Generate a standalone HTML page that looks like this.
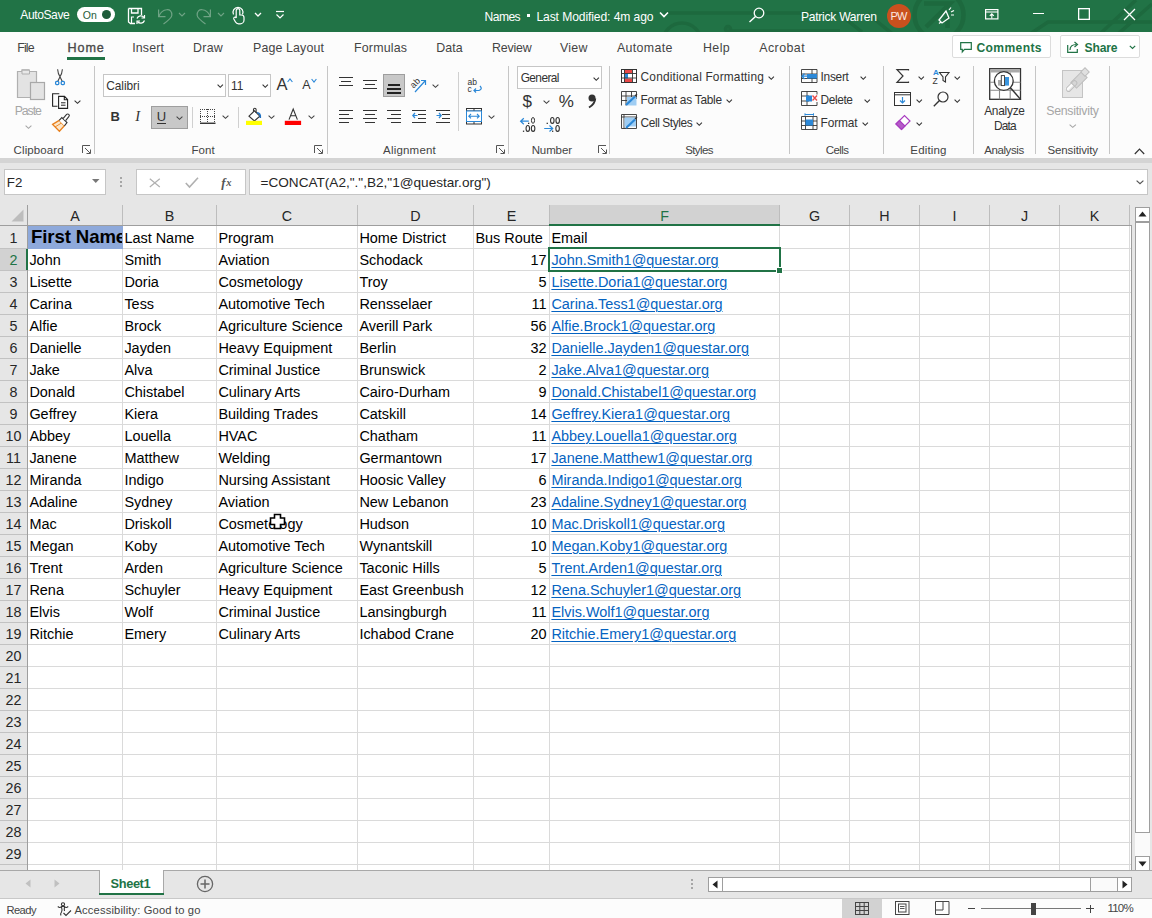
<!DOCTYPE html><html><head><meta charset="utf-8"><style>html,body{margin:0;padding:0;width:1152px;height:918px;overflow:hidden;background:#fff;position:relative}.t{position:absolute;white-space:nowrap;line-height:1;font-family:"Liberation Sans",sans-serif}svg{overflow:visible}</style></head><body>
<div style="position:absolute;left:0;top:0;width:1152px;height:32px;background:#217346;overflow:hidden">
<svg width="1152" height="32" style="position:absolute;left:0;top:0" fill="none" stroke="#1d693e" stroke-width="3.5"><path d="M664 13 H838 L862 32"/><circle cx="682" cy="42" r="19"/><circle cx="728" cy="29" r="2.5"/><path d="M730 31 H840"/><path d="M868 14 L900 40"/><circle cx="939" cy="15" r="24.5" stroke-width="4.5"/><path d="M924 3.5 H950 L926 27" stroke-width="4.5"/><path d="M947.5 17 V28" stroke-width="4.5"/><path d="M1030 34 L1048 22 H1152"/><path d="M1100 34 L1136 0"/><path d="M1118 34 L1152 4"/></svg>
</div>
<div class="t" style="left:20.30px;top:9.36px;font-size:12.1px;color:#ffffff;letter-spacing:-0.424px;font-weight:normal;font-style:normal;">AutoSave</div>
<div style="position:absolute;left:77px;top:7px;width:38px;height:15px;background:#fff;border-radius:8px"></div>
<div class="t" style="left:82.80px;top:9.71px;font-size:10.5px;color:#1e5c3a;letter-spacing:0.000px;font-weight:normal;font-style:normal;">On</div>
<div style="position:absolute;left:102px;top:10px;width:9px;height:9px;border-radius:50%;background:#1e5c3a"></div>
<svg style="position:absolute;left:127px;top:7px;" width="19" height="18" viewBox="0 0 19 18"><path d="M1.5 1.5 H14.5 V8" fill="none" stroke="#fff" stroke-width="1.3"/><path d="M1.5 1.5 V15 L3.5 16.5 H8" fill="none" stroke="#fff" stroke-width="1.3"/><path d="M4.5 1.5 V6 H11 V1.5" fill="none" stroke="#fff" stroke-width="1.3"/><path d="M4.5 16 V10 H7" fill="none" stroke="#fff" stroke-width="1.2"/><path d="M10 11.5 A4 4 0 0 1 17 10.5" fill="none" stroke="#fff" stroke-width="1.3"/><path d="M17.5 8 V11 H14.5" fill="none" stroke="#fff" stroke-width="1.2"/><path d="M17.5 13.5 A4 4 0 0 1 10.5 14.5" fill="none" stroke="#fff" stroke-width="1.3"/><path d="M10 17 V14 H13" fill="none" stroke="#fff" stroke-width="1.2"/></svg>
<svg style="position:absolute;left:150px;top:0px;left:0;top:0" width="80" height="32" viewBox="0 0 80 32"><path d="M158.6 9.5 V16.6 H165.5" fill="none" stroke="#6fa385" stroke-width="1.2"/><path d="M159 16 C162 8.5, 172.5 7, 171.8 15.5 C171.5 18, 169 20, 163.5 24" fill="none" stroke="#6fa385" stroke-width="1.2"/></svg>
<svg style="position:absolute;left:178px;top:12px;" width="8" height="5" viewBox="0 0 8 5"><path d="M1 1 L4 4 L7 1" fill="none" stroke="#6fa385" stroke-width="1.1"/></svg>
<svg style="position:absolute;left:190px;top:0px;left:0;top:0" width="30" height="32" viewBox="0 0 30 32"><path d="M210.4 9.5 V16.6 H203.5" fill="none" stroke="#6fa385" stroke-width="1.2"/><path d="M210 16 C207 8.5, 196.5 7, 197.2 15.5 C197.5 18, 200 20, 205.5 24" fill="none" stroke="#6fa385" stroke-width="1.2"/></svg>
<svg style="position:absolute;left:217px;top:12px;" width="8" height="5" viewBox="0 0 8 5"><path d="M1 1 L4 4 L7 1" fill="none" stroke="#6fa385" stroke-width="1.1"/></svg>
<svg style="position:absolute;left:0px;top:0px;left:0;top:0" width="300" height="32" viewBox="0 0 300 32"><path d="M233.5 14.5 A5 5 0 1 1 242.5 14.5" fill="none" stroke="#fff" stroke-width="1.2"/><path d="M236.2 18 V10.5 A1.8 1.8 0 0 1 239.8 10.5 V15 H241.5 A2.5 2.5 0 0 1 244 17.5 V20 A3.8 3.8 0 0 1 240.2 23.8 H238.5 A3.5 3.5 0 0 1 235.5 22 L233.8 19 A1.3 1.3 0 0 1 236.2 18 Z" fill="none" stroke="#fff" stroke-width="1.2"/></svg>
<svg style="position:absolute;left:254px;top:12px;" width="8" height="5" viewBox="0 0 8 5"><path d="M1 1 L4 4 L7 1" fill="none" stroke="#fff" stroke-width="1.3"/></svg>
<svg style="position:absolute;left:275px;top:10px;" width="10" height="10" viewBox="0 0 10 10"><path d="M1 1.5 H9" stroke="#fff" stroke-width="1.2"/><path d="M1.5 4.5 L5 8 L8.5 4.5" fill="none" stroke="#fff" stroke-width="1.2"/></svg>
<div class="t" style="left:484.60px;top:10.66px;font-size:12.1px;color:#ffffff;letter-spacing:-0.582px;font-weight:normal;font-style:normal;">Names</div>
<div style="position:absolute;left:527px;top:14px;width:3px;height:3px;background:#fff"></div>
<div class="t" style="left:536.40px;top:10.66px;font-size:12.1px;color:#ffffff;letter-spacing:-0.093px;font-weight:normal;font-style:normal;">Last Modified: 4m ago</div>
<svg style="position:absolute;left:659px;top:11px;" width="10" height="7" viewBox="0 0 10 7"><path d="M1 1.5 L5 5.5 L9 1.5" fill="none" stroke="#fff" stroke-width="1.6"/></svg>
<svg style="position:absolute;left:748px;top:7px;" width="18" height="16" viewBox="0 0 18 16"><circle cx="11" cy="6" r="4.8" fill="none" stroke="#fff" stroke-width="1.3"/><path d="M7.5 9.5 L1.5 15" stroke="#fff" stroke-width="1.4"/></svg>
<div class="t" style="left:801.00px;top:10.66px;font-size:12.1px;color:#ffffff;letter-spacing:-0.274px;font-weight:normal;font-style:normal;">Patrick Warren</div>
<div style="position:absolute;left:887px;top:4px;width:24px;height:24px;border-radius:50%;background:#c9501e"></div>
<div class="t" style="left:890.50px;top:10.99px;font-size:11px;color:#fde7e0;letter-spacing:-0.719px;font-weight:normal;font-style:normal;">PW</div>
<svg style="position:absolute;left:937px;top:6px;" width="18" height="18" viewBox="0 0 18 18"><path d="M2 14 L5 17 L12 12 L9 5 Z" fill="none" stroke="#fff" stroke-width="1.3"/><path d="M4 16 L2 17.5" stroke="#fff" stroke-width="1.3"/><path d="M12 4 L14 1.5 M14 6 L17 4.5 M14 9 L17 9" stroke="#fff" stroke-width="1.2"/></svg>
<svg style="position:absolute;left:985px;top:9px;" width="14" height="11" viewBox="0 0 14 11"><rect x="0.6" y="0.6" width="12.3" height="9.3" fill="none" stroke="#fff" stroke-width="1.2"/><path d="M0.6 3 H13" stroke="#fff" stroke-width="1.1"/><path d="M6.8 9.5 V4.8 M4.8 6.8 L6.8 4.8 L8.8 6.8" fill="none" stroke="#fff" stroke-width="1.1"/></svg>
<div style="position:absolute;left:1033px;top:13px;width:11px;height:1.3px;background:#fff"></div>
<svg style="position:absolute;left:1078px;top:8px;" width="12" height="12" viewBox="0 0 12 12"><rect x="0.65" y="0.65" width="10.7" height="10.7" fill="none" stroke="#fff" stroke-width="1.3"/></svg>
<svg style="position:absolute;left:1123px;top:8px;" width="13" height="13" viewBox="0 0 13 13"><path d="M1 1 L12 12 M12 1 L1 12" stroke="#fff" stroke-width="1.3"/></svg>
<div style="position:absolute;left:0px;top:32px;width:1152px;height:126px;background:#fcfcfc"></div>
<div class="t" style="left:17.30px;top:41.80px;font-size:12.4px;color:#444444;letter-spacing:-0.894px;font-weight:normal;font-style:normal;">File</div>
<div class="t" style="left:67.60px;top:41.63px;font-size:12.6px;color:#4a4a4a;letter-spacing:0.863px;font-weight:normal;font-style:normal;-webkit-text-stroke:0.35px #4a4a4a">Home</div>
<div class="t" style="left:132.20px;top:41.80px;font-size:12.4px;color:#444444;letter-spacing:0.158px;font-weight:normal;font-style:normal;">Insert</div>
<div class="t" style="left:193.00px;top:41.80px;font-size:12.4px;color:#444444;letter-spacing:0.288px;font-weight:normal;font-style:normal;">Draw</div>
<div class="t" style="left:253.00px;top:41.80px;font-size:12.4px;color:#444444;letter-spacing:0.136px;font-weight:normal;font-style:normal;">Page Layout</div>
<div class="t" style="left:354.00px;top:41.80px;font-size:12.4px;color:#444444;letter-spacing:0.189px;font-weight:normal;font-style:normal;">Formulas</div>
<div class="t" style="left:436.30px;top:41.80px;font-size:12.4px;color:#444444;letter-spacing:0.069px;font-weight:normal;font-style:normal;">Data</div>
<div class="t" style="left:491.90px;top:41.80px;font-size:12.4px;color:#444444;letter-spacing:-0.151px;font-weight:normal;font-style:normal;">Review</div>
<div class="t" style="left:560.00px;top:41.80px;font-size:12.4px;color:#444444;letter-spacing:0.249px;font-weight:normal;font-style:normal;">View</div>
<div class="t" style="left:616.90px;top:41.80px;font-size:12.4px;color:#444444;letter-spacing:0.346px;font-weight:normal;font-style:normal;">Automate</div>
<div class="t" style="left:703.00px;top:41.80px;font-size:12.4px;color:#444444;letter-spacing:0.399px;font-weight:normal;font-style:normal;">Help</div>
<div class="t" style="left:759.20px;top:41.80px;font-size:12.4px;color:#444444;letter-spacing:0.461px;font-weight:normal;font-style:normal;">Acrobat</div>
<div style="position:absolute;left:67px;top:57px;width:38px;height:3px;background:#217346"></div>
<div style="position:absolute;left:952px;top:35px;width:99px;height:23px;background:#fff;border:1px solid #dcdcdc;border-radius:2px;box-sizing:border-box"></div>
<svg style="position:absolute;left:960px;top:42px;" width="12" height="11" viewBox="0 0 12 11"><path d="M0.7 0.7 H11.3 V7.3 H4.5 L2.3 9.8 V7.3 H0.7 Z" fill="none" stroke="#217346" stroke-width="1.2"/></svg>
<div class="t" style="left:976.40px;top:42.16px;font-size:12.1px;color:#217346;letter-spacing:0.382px;font-weight:bold;font-style:normal;">Comments</div>
<div style="position:absolute;left:1060px;top:35px;width:80px;height:23px;background:#fff;border:1px solid #dcdcdc;border-radius:2px;box-sizing:border-box"></div>
<svg style="position:absolute;left:1067px;top:41px;" width="13" height="12" viewBox="0 0 13 12"><path d="M0.7 4 V11.3 H10.3 V8" fill="none" stroke="#217346" stroke-width="1.2"/><path d="M3 9 C3 5 6 3.5 9.5 3.5" fill="none" stroke="#217346" stroke-width="1.2"/><path d="M7.5 1 L10.5 3.5 L7.5 6" fill="none" stroke="#217346" stroke-width="1.2"/></svg>
<div class="t" style="left:1084.50px;top:42.16px;font-size:12.1px;color:#217346;letter-spacing:-0.157px;font-weight:bold;font-style:normal;">Share</div>
<svg style="position:absolute;left:1129px;top:45px;" width="7" height="5" viewBox="0 0 7 5"><path d="M0.8 0.8 L3.5 3.5 L6.2 0.8" fill="none" stroke="#217346" stroke-width="1.2"/></svg>
<div class="t" style="left:13.60px;top:144.97px;font-size:11.5px;color:#444444;letter-spacing:0.110px;font-weight:normal;font-style:normal;">Clipboard</div>
<div class="t" style="left:191.50px;top:144.97px;font-size:11.5px;color:#444444;letter-spacing:0.096px;font-weight:normal;font-style:normal;">Font</div>
<div class="t" style="left:383.00px;top:144.97px;font-size:11.5px;color:#444444;letter-spacing:0.208px;font-weight:normal;font-style:normal;">Alignment</div>
<div class="t" style="left:531.70px;top:144.97px;font-size:11.5px;color:#444444;letter-spacing:-0.120px;font-weight:normal;font-style:normal;">Number</div>
<div class="t" style="left:685.20px;top:144.97px;font-size:11.5px;color:#444444;letter-spacing:-0.603px;font-weight:normal;font-style:normal;">Styles</div>
<div class="t" style="left:825.80px;top:144.97px;font-size:11.5px;color:#444444;letter-spacing:-0.615px;font-weight:normal;font-style:normal;">Cells</div>
<div class="t" style="left:910.30px;top:144.97px;font-size:11.5px;color:#444444;letter-spacing:0.173px;font-weight:normal;font-style:normal;">Editing</div>
<div class="t" style="left:984.20px;top:144.97px;font-size:11.5px;color:#444444;letter-spacing:-0.403px;font-weight:normal;font-style:normal;">Analysis</div>
<div class="t" style="left:1047.50px;top:144.97px;font-size:11.5px;color:#444444;letter-spacing:-0.127px;font-weight:normal;font-style:normal;">Sensitivity</div>
<div style="position:absolute;left:94px;top:66px;width:1px;height:88px;background:#c6c6c6"></div>
<div style="position:absolute;left:327px;top:66px;width:1px;height:88px;background:#c6c6c6"></div>
<div style="position:absolute;left:508px;top:66px;width:1px;height:88px;background:#c6c6c6"></div>
<div style="position:absolute;left:609px;top:66px;width:1px;height:88px;background:#c6c6c6"></div>
<div style="position:absolute;left:789px;top:66px;width:1px;height:88px;background:#c6c6c6"></div>
<div style="position:absolute;left:883px;top:66px;width:1px;height:88px;background:#c6c6c6"></div>
<div style="position:absolute;left:973px;top:66px;width:1px;height:88px;background:#c6c6c6"></div>
<div style="position:absolute;left:1035px;top:66px;width:1px;height:88px;background:#c6c6c6"></div>
<div style="position:absolute;left:1109px;top:66px;width:1px;height:88px;background:#c6c6c6"></div>
<svg style="position:absolute;left:82px;top:145px;" width="9" height="9" viewBox="0 0 9 9"><path d="M0.5 8 V0.5 H8" fill="none" stroke="#555" stroke-width="1"/><path d="M3 3 L8 8 M4.5 8.5 H8.5 V4.5" fill="none" stroke="#555" stroke-width="1"/></svg>
<svg style="position:absolute;left:314px;top:145px;" width="9" height="9" viewBox="0 0 9 9"><path d="M0.5 8 V0.5 H8" fill="none" stroke="#555" stroke-width="1"/><path d="M3 3 L8 8 M4.5 8.5 H8.5 V4.5" fill="none" stroke="#555" stroke-width="1"/></svg>
<svg style="position:absolute;left:496px;top:145px;" width="9" height="9" viewBox="0 0 9 9"><path d="M0.5 8 V0.5 H8" fill="none" stroke="#555" stroke-width="1"/><path d="M3 3 L8 8 M4.5 8.5 H8.5 V4.5" fill="none" stroke="#555" stroke-width="1"/></svg>
<svg style="position:absolute;left:598px;top:145px;" width="9" height="9" viewBox="0 0 9 9"><path d="M0.5 8 V0.5 H8" fill="none" stroke="#555" stroke-width="1"/><path d="M3 3 L8 8 M4.5 8.5 H8.5 V4.5" fill="none" stroke="#555" stroke-width="1"/></svg>
<svg style="position:absolute;left:15px;top:69px;" width="31" height="32" viewBox="0 0 31 32"><path d="M2.5 2.5 H7 V0.8 H14 V2.5 H21.5 V28.5 H2.5 Z" fill="#e3e3e3" stroke="#b0b0b0" stroke-width="1.2"/><path d="M7 1.2 H14.5 V5 H7 Z" fill="#e8e8e8" stroke="#b0b0b0" stroke-width="1"/><rect x="15.5" y="13.5" width="14" height="17" fill="#e3e3e3" stroke="#a8a8a8" stroke-width="1.2"/></svg>
<div class="t" style="left:14.70px;top:104.99px;font-size:12.3px;color:#a6a6a6;letter-spacing:-1.063px;font-weight:normal;font-style:normal;">Paste</div>
<svg style="position:absolute;left:24.5px;top:124.5px;" width="7" height="4.5" viewBox="0 0 7 4.5"><path d="M0.6 0.6 L3.5 3.3 L6.4 0.6" fill="none" stroke="#a6a6a6" stroke-width="1.1"/></svg>
<svg style="position:absolute;left:0px;top:0px;left:0;top:0" width="10" height="10" viewBox="0 0 10 10"><path d="M57.6 69.3 Q58 74 60 76.8 L62.3 81.5 M62.4 69.3 Q62 74 60 76.8 L57.7 81.5" fill="none" stroke="#444" stroke-width="1.1"/><rect x="55.6" y="81.4" width="3.2" height="3.2" rx="1" fill="none" stroke="#2b88d8" stroke-width="1.3"/><rect x="61.2" y="81.4" width="3.2" height="3.2" rx="1" fill="none" stroke="#2b88d8" stroke-width="1.3"/></svg>
<svg style="position:absolute;left:0px;top:0px;left:0;top:0" width="10" height="10" viewBox="0 0 10 10"><path d="M59.3 93.8 H52.6 V106.3 H57.5" fill="none" stroke="#222" stroke-width="1.1"/><path d="M58.6 96.4 H64.5 L67.6 99.5 V108.4 H58.6 Z M64.3 96.4 V99.7 H67.6" fill="#fff" stroke="#222" stroke-width="1.1"/><path d="M61 102.8 H65.5 M61 105.2 H65.5" stroke="#222" stroke-width="1"/></svg>
<svg style="position:absolute;left:74px;top:99.5px;" width="7" height="4.5" viewBox="0 0 7 4.5"><path d="M0.6 0.6 L3.5 3.3 L6.4 0.6" fill="none" stroke="#333" stroke-width="1.1"/></svg>
<svg style="position:absolute;left:0px;top:0px;left:0;top:0" width="10" height="10" viewBox="0 0 10 10"><path d="M52.6 124.4 L59.2 120.4 L64.4 125.8 L59.4 131.2 Z" fill="#fde6c8" stroke="#e8801e" stroke-width="1.3"/><path d="M55 127 L61.5 123" stroke="#e8801e" stroke-width="0.9"/><path d="M59.2 120.4 L61.8 117.6 L67 122.6 L64.4 125.8" fill="#fff" stroke="#333" stroke-width="1.1"/><path d="M63 118.6 L66.6 114.4 A1.4 1.4 0 0 1 68.8 116.6 L65.6 120.6" fill="#fff" stroke="#333" stroke-width="1.1"/></svg>
<div style="position:absolute;left:103px;top:74px;width:123px;height:23px;background:#fff;border:1px solid #c6c6c6;box-sizing:border-box"></div>
<div class="t" style="left:106.20px;top:80.73px;font-size:11.9px;color:#333;letter-spacing:-0.037px;font-weight:normal;font-style:normal;">Calibri</div>
<svg style="position:absolute;left:216.5px;top:84.3px;" width="6.5" height="4.5" viewBox="0 0 6.5 4.5"><path d="M0.6 0.6 L3.25 3.3 L5.9 0.6" fill="none" stroke="#333" stroke-width="1.1"/></svg>
<div style="position:absolute;left:228px;top:74px;width:43px;height:23px;background:#fff;border:1px solid #c6c6c6;box-sizing:border-box"></div>
<div class="t" style="left:231.00px;top:80.73px;font-size:11.9px;color:#333;letter-spacing:0.000px;font-weight:normal;font-style:normal;">11</div>
<svg style="position:absolute;left:261.7px;top:84.3px;" width="6.5" height="4.5" viewBox="0 0 6.5 4.5"><path d="M0.6 0.6 L3.25 3.3 L5.9 0.6" fill="none" stroke="#333" stroke-width="1.1"/></svg>
<div class="t" style="left:276.50px;top:75.93px;font-size:16.5px;color:#333;letter-spacing:0.000px;font-weight:normal;font-style:normal;">A</div>
<svg style="position:absolute;left:287px;top:78px;" width="6" height="5" viewBox="0 0 6 5"><path d="M0.6 4 L3 1 L5.4 4" fill="none" stroke="#2b88d8" stroke-width="1.1"/></svg>
<div class="t" style="left:302.30px;top:79.32px;font-size:12.5px;color:#333;letter-spacing:0.000px;font-weight:normal;font-style:normal;">A</div>
<svg style="position:absolute;left:311px;top:78px;" width="6" height="5" viewBox="0 0 6 5"><path d="M0.6 1 L3 4 L5.4 1" fill="none" stroke="#2b88d8" stroke-width="1.1"/></svg>
<div class="t" style="left:110.60px;top:110.20px;font-size:13px;color:#333;letter-spacing:0.000px;font-weight:bold;font-style:normal;">B</div>
<div class="t" style="left:135.30px;top:109.23px;font-size:14.5px;color:#333;letter-spacing:0.000px;font-weight:normal;font-style:normal;font-family:'Liberation Serif',serif;font-style:italic">I</div>
<div style="position:absolute;left:151px;top:106px;width:37px;height:23px;background:#c8c8c8;border:1px solid #9e9e9e;box-sizing:border-box"></div>
<div class="t" style="left:156.80px;top:110.00px;font-size:13px;color:#333;letter-spacing:0.000px;font-weight:normal;font-style:normal;">U</div>
<div style="position:absolute;left:157px;top:123px;width:9px;height:1px;background:#333"></div>
<svg style="position:absolute;left:176.3px;top:115.5px;" width="7" height="4.5" viewBox="0 0 7 4.5"><path d="M0.6 0.6 L3.5 3.3 L6.4 0.6" fill="none" stroke="#444" stroke-width="1.1"/></svg>
<div style="position:absolute;left:192px;top:107px;width:1px;height:21px;background:#d0d0d0"></div>
<svg style="position:absolute;left:0px;top:0px;left:0;top:0" width="10" height="10" viewBox="0 0 10 10"><g fill="#444"><rect x="200" y="109" width="1" height="1"/><rect x="200" y="116" width="1" height="1"/><rect x="202" y="109" width="1" height="1"/><rect x="202" y="116" width="1" height="1"/><rect x="204" y="109" width="1" height="1"/><rect x="204" y="116" width="1" height="1"/><rect x="206" y="109" width="1" height="1"/><rect x="206" y="116" width="1" height="1"/><rect x="208" y="109" width="1" height="1"/><rect x="208" y="116" width="1" height="1"/><rect x="210" y="109" width="1" height="1"/><rect x="210" y="116" width="1" height="1"/><rect x="212" y="109" width="1" height="1"/><rect x="212" y="116" width="1" height="1"/><rect x="214" y="109" width="1" height="1"/><rect x="214" y="116" width="1" height="1"/><rect x="200" y="109" width="1" height="1"/><rect x="207" y="109" width="1" height="1"/><rect x="214" y="109" width="1" height="1"/><rect x="200" y="111" width="1" height="1"/><rect x="207" y="111" width="1" height="1"/><rect x="214" y="111" width="1" height="1"/><rect x="200" y="113" width="1" height="1"/><rect x="207" y="113" width="1" height="1"/><rect x="214" y="113" width="1" height="1"/><rect x="200" y="115" width="1" height="1"/><rect x="207" y="115" width="1" height="1"/><rect x="214" y="115" width="1" height="1"/><rect x="200" y="117" width="1" height="1"/><rect x="207" y="117" width="1" height="1"/><rect x="214" y="117" width="1" height="1"/><rect x="200" y="119" width="1" height="1"/><rect x="207" y="119" width="1" height="1"/><rect x="214" y="119" width="1" height="1"/><rect x="200" y="121" width="1" height="1"/><rect x="207" y="121" width="1" height="1"/><rect x="214" y="121" width="1" height="1"/></g><rect x="200" y="122.6" width="15.5" height="1.3" fill="#222"/></svg>
<svg style="position:absolute;left:222.3px;top:115.3px;" width="7" height="4.5" viewBox="0 0 7 4.5"><path d="M0.6 0.6 L3.5 3.3 L6.4 0.6" fill="none" stroke="#444" stroke-width="1.1"/></svg>
<div style="position:absolute;left:238px;top:107px;width:1px;height:21px;background:#d0d0d0"></div>
<svg style="position:absolute;left:0px;top:0px;left:0;top:0" width="10" height="10" viewBox="0 0 10 10"><path d="M249 116.2 L254.5 110.8 L259.8 116.2 L254.4 121 Z" fill="#fff" stroke="#333" stroke-width="1.1"/><path d="M253.5 111.5 V109.6 A1.3 1.3 0 0 1 256.1 109.6 V113" fill="none" stroke="#333" stroke-width="1.1"/><path d="M257 112.8 Q260.8 113 260.3 118" fill="none" stroke="#1e6fc0" stroke-width="1.6"/><rect x="246" y="120.8" width="16" height="4.2" fill="#ffff00"/></svg>
<svg style="position:absolute;left:268.3px;top:115.3px;" width="7" height="4.5" viewBox="0 0 7 4.5"><path d="M0.6 0.6 L3.5 3.3 L6.4 0.6" fill="none" stroke="#444" stroke-width="1.1"/></svg>
<svg style="position:absolute;left:0px;top:0px;left:0;top:0" width="10" height="10" viewBox="0 0 10 10"><path d="M289 119.6 L293.2 109 L297.4 119.6 M290.5 115.8 H296" fill="none" stroke="#333" stroke-width="1.1"/><rect x="284.8" y="120.8" width="16.3" height="4.2" fill="#ff0000"/></svg>
<svg style="position:absolute;left:307.5px;top:115.3px;" width="7" height="4.5" viewBox="0 0 7 4.5"><path d="M0.6 0.6 L3.5 3.3 L6.4 0.6" fill="none" stroke="#444" stroke-width="1.1"/></svg>
<div style="position:absolute;left:339px;top:77px;width:14px;height:1.3px;background:#333"></div>
<div style="position:absolute;left:341px;top:81px;width:10px;height:1.3px;background:#333"></div>
<div style="position:absolute;left:339px;top:85px;width:14px;height:1.3px;background:#333"></div>
<div style="position:absolute;left:363px;top:80px;width:14px;height:1.3px;background:#333"></div>
<div style="position:absolute;left:365px;top:84px;width:10px;height:1.3px;background:#333"></div>
<div style="position:absolute;left:363px;top:88px;width:14px;height:1.3px;background:#333"></div>
<div style="position:absolute;left:383px;top:74px;width:22px;height:23px;background:#c8c8c8;border:1px solid #9e9e9e;box-sizing:border-box"></div>
<div style="position:absolute;left:388px;top:84px;width:12px;height:1.6px;background:#222"></div>
<div style="position:absolute;left:387px;top:88px;width:14px;height:1.6px;background:#222"></div>
<div style="position:absolute;left:387px;top:92px;width:14px;height:1.6px;background:#222"></div>
<svg style="position:absolute;left:410px;top:76px;" width="18" height="17" viewBox="0 0 18 17"><text x="0" y="10" font-size="9" font-family="Liberation Sans" fill="#333" transform="rotate(-45 5 7)">ab</text><path d="M5 16 L15 5 M11 4.5 H15.5 V9" fill="none" stroke="#2b88d8" stroke-width="1.2"/></svg>
<svg style="position:absolute;left:431.5px;top:83.5px;" width="7" height="4.5" viewBox="0 0 7 4.5"><path d="M0.6 0.6 L3.5 3.3 L6.4 0.6" fill="none" stroke="#444" stroke-width="1.1"/></svg>
<div style="position:absolute;left:339px;top:110px;width:14px;height:1.3px;background:#333"></div>
<div style="position:absolute;left:339px;top:114px;width:10px;height:1.3px;background:#333"></div>
<div style="position:absolute;left:339px;top:118px;width:14px;height:1.3px;background:#333"></div>
<div style="position:absolute;left:339px;top:122px;width:10px;height:1.3px;background:#333"></div>
<div style="position:absolute;left:363px;top:110px;width:14px;height:1.3px;background:#333"></div>
<div style="position:absolute;left:365px;top:114px;width:10px;height:1.3px;background:#333"></div>
<div style="position:absolute;left:363px;top:118px;width:14px;height:1.3px;background:#333"></div>
<div style="position:absolute;left:365px;top:122px;width:10px;height:1.3px;background:#333"></div>
<div style="position:absolute;left:387px;top:110px;width:14px;height:1.3px;background:#333"></div>
<div style="position:absolute;left:391px;top:114px;width:10px;height:1.3px;background:#333"></div>
<div style="position:absolute;left:387px;top:118px;width:14px;height:1.3px;background:#333"></div>
<div style="position:absolute;left:391px;top:122px;width:10px;height:1.3px;background:#333"></div>
<div style="position:absolute;left:412px;top:110px;width:14px;height:1.3px;background:#333"></div>
<div style="position:absolute;left:412px;top:122px;width:14px;height:1.3px;background:#333"></div>
<div style="position:absolute;left:418px;top:114px;width:8px;height:1.3px;background:#333"></div>
<div style="position:absolute;left:418px;top:118px;width:8px;height:1.3px;background:#333"></div>
<svg style="position:absolute;left:412px;top:112px;" width="6" height="7" viewBox="0 0 6 7"><path d="M5.5 3.5 H0.8 M3 1 L0.8 3.5 L3 6" fill="none" stroke="#2b88d8" stroke-width="1.2"/></svg>
<div style="position:absolute;left:436px;top:110px;width:14px;height:1.3px;background:#333"></div>
<div style="position:absolute;left:436px;top:122px;width:14px;height:1.3px;background:#333"></div>
<div style="position:absolute;left:442px;top:114px;width:8px;height:1.3px;background:#333"></div>
<div style="position:absolute;left:442px;top:118px;width:8px;height:1.3px;background:#333"></div>
<svg style="position:absolute;left:436px;top:112px;" width="6" height="7" viewBox="0 0 6 7"><path d="M0.5 3.5 H5 M3 1 L5.2 3.5 L3 6" fill="none" stroke="#2b88d8" stroke-width="1.2"/></svg>
<div style="position:absolute;left:458px;top:72px;width:1px;height:59px;background:#d0d0d0"></div>
<svg style="position:absolute;left:467px;top:77px;" width="17" height="17" viewBox="0 0 17 17"><text x="0.5" y="7.5" font-size="8.5" font-family="Liberation Sans" fill="#333">ab</text><text x="0.5" y="15" font-size="8.5" font-family="Liberation Sans" fill="#333">c</text><path d="M13 9 Q16 12 12 13.5 H7 M9 11.5 L7 13.5 L9 15.5" fill="none" stroke="#2b88d8" stroke-width="1.2"/></svg>
<svg style="position:absolute;left:466px;top:108px;" width="16" height="17" viewBox="0 0 16 17"><rect x="0.5" y="0.5" width="15" height="15.5" fill="none" stroke="#333" stroke-width="1"/><path d="M0.5 3 H15.5 M0.5 13.5 H15.5 M8 0.5 V3 M8 13.5 V16" stroke="#333" stroke-width="1"/><rect x="0.5" y="3" width="15" height="10.5" fill="#fff" stroke="#2b88d8" stroke-width="1"/><path d="M3 8.2 H13 M5 6 L2.8 8.2 L5 10.4 M11 6 L13.2 8.2 L11 10.4" fill="none" stroke="#2b88d8" stroke-width="1.1"/></svg>
<svg style="position:absolute;left:488.3px;top:115.3px;" width="7" height="4.5" viewBox="0 0 7 4.5"><path d="M0.6 0.6 L3.5 3.3 L6.4 0.6" fill="none" stroke="#444" stroke-width="1.1"/></svg>
<div style="position:absolute;left:517px;top:66px;width:85px;height:23px;background:#fff;border:1px solid #c6c6c6;box-sizing:border-box"></div>
<div class="t" style="left:520.70px;top:72.83px;font-size:11.9px;color:#333;letter-spacing:-0.589px;font-weight:normal;font-style:normal;">General</div>
<svg style="position:absolute;left:592.7px;top:76.5px;" width="6.5" height="4.5" viewBox="0 0 6.5 4.5"><path d="M0.6 0.6 L3.25 3.3 L5.9 0.6" fill="none" stroke="#333" stroke-width="1.1"/></svg>
<div class="t" style="left:522.50px;top:93.11px;font-size:17px;color:#333;letter-spacing:0.000px;font-weight:normal;font-style:normal;">$</div>
<svg style="position:absolute;left:542.6px;top:99.5px;" width="7" height="4.5" viewBox="0 0 7 4.5"><path d="M0.6 0.6 L3.5 3.3 L6.4 0.6" fill="none" stroke="#444" stroke-width="1.1"/></svg>
<div class="t" style="left:558.80px;top:93.11px;font-size:17px;color:#333;letter-spacing:0.000px;font-weight:normal;font-style:normal;">%</div>
<svg style="position:absolute;left:587px;top:94px;" width="9" height="14" viewBox="0 0 9 14"><circle cx="5" cy="4" r="3.5" fill="#333"/><path d="M8.2 4.5 Q8 10 2 13.5" fill="none" stroke="#333" stroke-width="2"/></svg>
<svg style="position:absolute;left:0px;top:0px;left:0;top:0" width="10" height="10" viewBox="0 0 10 10"><path d="M528.8 121.2 H520.8 M523.8 118.2 L520.6 121.2 L523.8 124.2" fill="none" stroke="#2b88d8" stroke-width="1.2"/><ellipse cx="533" cy="120.4" rx="1.55" ry="2.9" fill="none" stroke="#333" stroke-width="1"/><rect x="528.0" y="122.7" width="1.3" height="1.3" fill="#333"/><rect x="522.9" y="130.6" width="1.3" height="1.3" fill="#333"/><ellipse cx="527.8" cy="128.4" rx="1.75" ry="2.95" fill="none" stroke="#333" stroke-width="1.1"/><ellipse cx="533.1" cy="128.4" rx="1.75" ry="2.95" fill="none" stroke="#333" stroke-width="1.1"/><rect x="546.6" y="122.7" width="1.3" height="1.3" fill="#333"/><ellipse cx="552.3" cy="120.4" rx="1.75" ry="2.95" fill="none" stroke="#333" stroke-width="1.1"/><ellipse cx="557.7" cy="120.4" rx="1.75" ry="2.95" fill="none" stroke="#333" stroke-width="1.1"/><path d="M544.2 128.5 H552.5 M549.5 125.5 L552.7 128.5 L549.5 131.5" fill="none" stroke="#2b88d8" stroke-width="1.2"/><rect x="552.0" y="130.6" width="1.3" height="1.3" fill="#333"/><ellipse cx="557.6" cy="128.4" rx="1.75" ry="2.95" fill="none" stroke="#333" stroke-width="1.1"/></svg>
<svg style="position:absolute;left:621px;top:69px;" width="17" height="14" viewBox="0 0 17 14"><rect x="0.5" y="0.5" width="15" height="13" fill="#fff" stroke="#333" stroke-width="1"/><rect x="3" y="1" width="8" height="3" fill="#e84848"/><rect x="3" y="9.5" width="8" height="3.5" fill="#e84848"/><rect x="4" y="4.5" width="3" height="5" fill="#2b88d8"/><path d="M0.5 4.5 H15.5 M0.5 9 H15.5 M3.5 0.5 V13.5 M11.5 0.5 V13.5" stroke="#333" stroke-width="0.9"/></svg>
<div class="t" style="left:640.60px;top:72.03px;font-size:11.9px;color:#333;letter-spacing:0.170px;font-weight:normal;font-style:normal;">Conditional Formatting</div>
<svg style="position:absolute;left:768.2px;top:76px;" width="6.5" height="4.5" viewBox="0 0 6.5 4.5"><path d="M0.6 0.6 L3.25 3.3 L5.9 0.6" fill="none" stroke="#333" stroke-width="1.1"/></svg>
<svg style="position:absolute;left:621px;top:91px;" width="17" height="15" viewBox="0 0 17 15"><path d="M0.5 14.5 V0.5 H15.5 V8 M0.5 5 H15.5 M0.5 9.5 H8 M5 0.5 V14.5 M10.5 0.5 V6" fill="none" stroke="#333" stroke-width="0.9"/><rect x="6" y="6" width="9.5" height="8.5" fill="#9fcdf3"/><path d="M5 14 L14 5.5" stroke="#2b88d8" stroke-width="2.2"/><path d="M14 5 L16 3" stroke="#333" stroke-width="1.2"/></svg>
<div class="t" style="left:640.60px;top:94.93px;font-size:11.9px;color:#333;letter-spacing:-0.250px;font-weight:normal;font-style:normal;">Format as Table</div>
<svg style="position:absolute;left:725.7px;top:99px;" width="6.5" height="4.5" viewBox="0 0 6.5 4.5"><path d="M0.6 0.6 L3.25 3.3 L5.9 0.6" fill="none" stroke="#333" stroke-width="1.1"/></svg>
<svg style="position:absolute;left:621px;top:114px;" width="17" height="15" viewBox="0 0 17 15"><path d="M0.5 14.5 V0.5 H15.5 V14.5 H0.5 M3 0.5 V14.5 M0.5 3 H15.5" fill="none" stroke="#333" stroke-width="0.9"/><rect x="3.5" y="3.5" width="11.5" height="9" fill="#9fcdf3"/><path d="M5 14 L14 5.5" stroke="#2b88d8" stroke-width="2.2"/><path d="M14 5 L16 3" stroke="#333" stroke-width="1.2"/></svg>
<div class="t" style="left:640.60px;top:117.83px;font-size:11.9px;color:#333;letter-spacing:-0.411px;font-weight:normal;font-style:normal;">Cell Styles</div>
<svg style="position:absolute;left:696px;top:122px;" width="6.5" height="4.5" viewBox="0 0 6.5 4.5"><path d="M0.6 0.6 L3.25 3.3 L5.9 0.6" fill="none" stroke="#333" stroke-width="1.1"/></svg>
<svg style="position:absolute;left:801px;top:69px;" width="17" height="14" viewBox="0 0 17 14"><path d="M0.5 0.5 H16 V13.5 H0.5 Z M0.5 5 H16 M0.5 9.5 H16 M11 0.5 V13.5" fill="none" stroke="#333" stroke-width="0.9"/><rect x="6" y="5" width="10" height="4.5" fill="#2b88d8"/><path d="M9 7.2 H1 M3.5 4.5 L1 7.2 L3.5 10" fill="none" stroke="#2b88d8" stroke-width="1.3"/></svg>
<div class="t" style="left:820.60px;top:72.03px;font-size:11.9px;color:#333;letter-spacing:-0.292px;font-weight:normal;font-style:normal;">Insert</div>
<svg style="position:absolute;left:860px;top:76px;" width="6.5" height="4.5" viewBox="0 0 6.5 4.5"><path d="M0.6 0.6 L3.25 3.3 L5.9 0.6" fill="none" stroke="#333" stroke-width="1.1"/></svg>
<svg style="position:absolute;left:801px;top:91px;" width="17" height="15" viewBox="0 0 17 15"><path d="M0.5 0.5 H16 V3.5 M0.5 0.5 V14.5 H16 V11 M0.5 5 H8 M0.5 10 H8 M6 0.5 V14.5" fill="none" stroke="#333" stroke-width="0.9"/><rect x="5" y="4.5" width="6" height="6" fill="#2b88d8"/><path d="M11.5 4.5 L16 9.5 M16 4.5 L11.5 9.5" stroke="#e84848" stroke-width="1.3"/></svg>
<div class="t" style="left:820.60px;top:94.93px;font-size:11.9px;color:#333;letter-spacing:-0.400px;font-weight:normal;font-style:normal;">Delete</div>
<svg style="position:absolute;left:864px;top:99px;" width="6.5" height="4.5" viewBox="0 0 6.5 4.5"><path d="M0.6 0.6 L3.25 3.3 L5.9 0.6" fill="none" stroke="#333" stroke-width="1.1"/></svg>
<svg style="position:absolute;left:801px;top:113px;" width="17" height="17" viewBox="0 0 17 17"><path d="M0.5 3.5 H16 V16.5 H0.5 Z M0.5 8 H16 M0.5 12.5 H16 M4.5 3.5 V16.5 M12 3.5 V16.5" fill="none" stroke="#333" stroke-width="0.9"/><rect x="4.5" y="6.5" width="7.5" height="6" fill="#2b88d8"/><path d="M4 1.5 H12.5 M4 0.3 V2.7 M12.5 0.3 V2.7" stroke="#2b88d8" stroke-width="1"/></svg>
<div class="t" style="left:820.60px;top:117.83px;font-size:11.9px;color:#333;letter-spacing:-0.137px;font-weight:normal;font-style:normal;">Format</div>
<svg style="position:absolute;left:862.3px;top:122px;" width="6.5" height="4.5" viewBox="0 0 6.5 4.5"><path d="M0.6 0.6 L3.25 3.3 L5.9 0.6" fill="none" stroke="#333" stroke-width="1.1"/></svg>
<svg style="position:absolute;left:896px;top:69px;" width="14" height="14" viewBox="0 0 14 14"><path d="M12.5 1.5 V0.7 H1 L7 7 L1 13.3 H12.5 V12.5" fill="none" stroke="#333" stroke-width="1.2"/></svg>
<svg style="position:absolute;left:917.8px;top:76px;" width="6.5" height="4.5" viewBox="0 0 6.5 4.5"><path d="M0.6 0.6 L3.25 3.3 L5.9 0.6" fill="none" stroke="#333" stroke-width="1.1"/></svg>
<svg style="position:absolute;left:932px;top:67px;" width="18" height="17" viewBox="0 0 18 17"><text x="1" y="7.5" font-size="8" font-weight="bold" font-family="Liberation Sans" fill="#2b88d8">A</text><text x="0.5" y="16.5" font-size="8.5" font-family="Liberation Sans" fill="#333">Z</text><path d="M7.5 5.5 H17 L13.5 10 V15 L11 13.5 V10 Z" fill="none" stroke="#333" stroke-width="1.1"/></svg>
<svg style="position:absolute;left:953.75px;top:76px;" width="6.5" height="4.5" viewBox="0 0 6.5 4.5"><path d="M0.6 0.6 L3.25 3.3 L5.9 0.6" fill="none" stroke="#333" stroke-width="1.1"/></svg>
<svg style="position:absolute;left:894px;top:92px;" width="17" height="14" viewBox="0 0 17 14"><rect x="0.5" y="0.5" width="16" height="13" fill="#fff" stroke="#333" stroke-width="1"/><path d="M0.5 2.8 H16.5" stroke="#333" stroke-width="1"/><path d="M8.5 5 V11 M6 8.5 L8.5 11 L11 8.5" fill="none" stroke="#2b88d8" stroke-width="1.2"/></svg>
<svg style="position:absolute;left:915.5px;top:99px;" width="6.5" height="4.5" viewBox="0 0 6.5 4.5"><path d="M0.6 0.6 L3.25 3.3 L5.9 0.6" fill="none" stroke="#333" stroke-width="1.1"/></svg>
<svg style="position:absolute;left:933px;top:91px;" width="16" height="16" viewBox="0 0 16 16"><circle cx="10" cy="6" r="5" fill="none" stroke="#333" stroke-width="1.2"/><path d="M6.5 9.5 L0.8 15.2" stroke="#333" stroke-width="1.4"/></svg>
<svg style="position:absolute;left:953.75px;top:99px;" width="6.5" height="4.5" viewBox="0 0 6.5 4.5"><path d="M0.6 0.6 L3.25 3.3 L5.9 0.6" fill="none" stroke="#333" stroke-width="1.1"/></svg>
<svg style="position:absolute;left:895px;top:114px;" width="16" height="16" viewBox="0 0 16 16"><path d="M1 10 L9.5 1.5 L15 7 L6.5 15.5 Z" fill="#fff" stroke="#a83cc0" stroke-width="1.2"/><path d="M1 10 L4.5 6.5 L10 12 L6.5 15.5 Z" fill="#b55cc8" stroke="#a83cc0" stroke-width="1.1"/></svg>
<svg style="position:absolute;left:915.5px;top:122px;" width="6.5" height="4.5" viewBox="0 0 6.5 4.5"><path d="M0.6 0.6 L3.25 3.3 L5.9 0.6" fill="none" stroke="#333" stroke-width="1.1"/></svg>
<svg style="position:absolute;left:0px;top:0px;left:0;top:0" width="10" height="10" viewBox="0 0 10 10"><rect x="989.7" y="68.7" width="30.8" height="30.6" fill="#fff" stroke="#333" stroke-width="1.3"/><rect x="990.3" y="69.3" width="29.6" height="3.2" fill="#aaa"/><path d="M990 82.2 H1020.5 M990 90.2 H1020.5 M999.5 72.5 V99.3 M1010.2 72.5 V99.3" stroke="#8a8a8a" stroke-width="1.1"/><circle cx="1003.8" cy="81" r="9.4" fill="#fff" stroke="#333" stroke-width="1.3"/><path d="M1010.4 87.8 L1020.8 99.6" stroke="#333" stroke-width="1.4"/><rect x="998" y="80" width="3" height="5.6" fill="#aaa"/><rect x="1001.3" y="75.6" width="3.2" height="10" fill="#fff" stroke="#333" stroke-width="0.9"/><rect x="1005" y="77" width="4" height="8.6" fill="#3a96e0"/></svg>
<div class="t" style="left:984.20px;top:105.93px;font-size:11.9px;color:#333;letter-spacing:-0.256px;font-weight:normal;font-style:normal;">Analyze</div>
<div class="t" style="left:993.90px;top:121.33px;font-size:11.9px;color:#333;letter-spacing:-0.812px;font-weight:normal;font-style:normal;">Data</div>
<svg style="position:absolute;left:0px;top:0px;left:0;top:0" width="10" height="10" viewBox="0 0 10 10"><rect x="1062.5" y="70.5" width="20" height="27" fill="#e6e6e6" stroke="#c4c4c4" stroke-width="1"/><path d="M1066 90 L1088 68" stroke="#fcfcfc" stroke-width="3.5"/><rect x="1071.5" y="76" width="15" height="8" transform="rotate(-45 1079 80)" fill="#d6d6d6" stroke="#bdbdbd" stroke-width="1"/><rect x="1082" y="69" width="6" height="6" transform="rotate(-45 1085 72)" fill="#e0e0e0" stroke="#bdbdbd" stroke-width="1"/><rect x="1065" y="83.8" width="13" height="4.6" rx="2" transform="rotate(-45 1071.5 86)" fill="none" stroke="#bdbdbd" stroke-width="1"/></svg>
<div class="t" style="left:1046.20px;top:104.99px;font-size:12.3px;color:#a6a6a6;letter-spacing:-0.257px;font-weight:normal;font-style:normal;">Sensitivity</div>
<svg style="position:absolute;left:1069px;top:124.3px;" width="7.5" height="4.5" viewBox="0 0 7.5 4.5"><path d="M0.6 0.6 L3.75 3.3 L6.9 0.6" fill="none" stroke="#a6a6a6" stroke-width="1.1"/></svg>
<svg style="position:absolute;left:1134px;top:148px;" width="11" height="7" viewBox="0 0 11 7"><path d="M0.8 6 L5.5 1.2 L10.2 6" fill="none" stroke="#333" stroke-width="1.2"/></svg>
<div style="position:absolute;left:0px;top:158px;width:1152px;height:5px;background:#d4d4d4"></div>
<div style="position:absolute;left:0px;top:163px;width:1152px;height:707px;background:#e6e6e6"></div>
<div style="position:absolute;left:4px;top:169px;width:102px;height:26px;background:#fff;border:1px solid #c6c6c6;box-sizing:border-box"></div>
<div class="t" style="left:6.80px;top:176.04px;font-size:13.3px;color:#262626;letter-spacing:0.000px;font-weight:normal;font-style:normal;">F2</div>
<svg style="position:absolute;left:92px;top:179px;" width="8" height="5" viewBox="0 0 8 5"><path d="M0 0 H7.5 L3.75 4 Z" fill="#777"/></svg>
<div style="position:absolute;left:120px;top:177px;width:2px;height:2px;background:#a6a6a6"></div>
<div style="position:absolute;left:120px;top:181px;width:2px;height:2px;background:#a6a6a6"></div>
<div style="position:absolute;left:120px;top:185px;width:2px;height:2px;background:#a6a6a6"></div>
<div style="position:absolute;left:136px;top:169px;width:110px;height:26px;background:#fff;border:1px solid #c6c6c6;box-sizing:border-box"></div>
<svg style="position:absolute;left:149px;top:178px;" width="12" height="10" viewBox="0 0 12 10"><path d="M0.8 0.8 L10.8 9 M10.8 0.8 L0.8 9" stroke="#b0b0b0" stroke-width="1.2"/></svg>
<svg style="position:absolute;left:185px;top:177px;" width="14" height="11" viewBox="0 0 14 11"><path d="M0.8 6 L4.5 10 L13 0.8" fill="none" stroke="#b0b0b0" stroke-width="1.6"/></svg>
<div class="t" style="left:221.30px;top:175.50px;font-size:13px;color:#555;letter-spacing:0.000px;font-weight:normal;font-style:italic;font-family:'Liberation Serif',serif;font-weight:bold">f</div>
<div class="t" style="left:226.30px;top:177.61px;font-size:10.5px;color:#555;letter-spacing:0.000px;font-weight:normal;font-style:italic;font-family:'Liberation Serif',serif;font-weight:bold">x</div>
<div style="position:absolute;left:249px;top:169px;width:899px;height:26px;background:#fff;border:1px solid #c6c6c6;box-sizing:border-box"></div>
<div class="t" style="left:260.50px;top:175.79px;font-size:13.6px;color:#262626;letter-spacing:-0.001px;font-weight:normal;font-style:normal;">=CONCAT(A2,".",B2,"1@questar.org")</div>
<svg style="position:absolute;left:1135.5px;top:179.5px;" width="8" height="5" viewBox="0 0 8 5"><path d="M0.6 0.6 L4.0 3.8 L7.4 0.6" fill="none" stroke="#555" stroke-width="1.2"/></svg>
<div style="position:absolute;left:28px;top:226px;width:1103px;height:644px;background:#ffffff"></div>
<div style="position:absolute;left:550px;top:205px;width:229px;height:20px;background:#d2d2d2"></div>
<div style="position:absolute;left:0px;top:249px;width:27px;height:21px;background:#d2d2d2"></div>
<div style="position:absolute;left:28px;top:226px;width:95px;height:23px;background:#8ea9db"></div>
<div style="position:absolute;left:28px;top:248px;width:1103px;height:1px;background:#dadada"></div><div style="position:absolute;left:0px;top:248px;width:27px;height:1px;background:#c2c2c2"></div><div style="position:absolute;left:28px;top:270px;width:1103px;height:1px;background:#dadada"></div><div style="position:absolute;left:0px;top:270px;width:27px;height:1px;background:#c2c2c2"></div><div style="position:absolute;left:28px;top:292px;width:1103px;height:1px;background:#dadada"></div><div style="position:absolute;left:0px;top:292px;width:27px;height:1px;background:#c2c2c2"></div><div style="position:absolute;left:28px;top:314px;width:1103px;height:1px;background:#dadada"></div><div style="position:absolute;left:0px;top:314px;width:27px;height:1px;background:#c2c2c2"></div><div style="position:absolute;left:28px;top:336px;width:1103px;height:1px;background:#dadada"></div><div style="position:absolute;left:0px;top:336px;width:27px;height:1px;background:#c2c2c2"></div><div style="position:absolute;left:28px;top:358px;width:1103px;height:1px;background:#dadada"></div><div style="position:absolute;left:0px;top:358px;width:27px;height:1px;background:#c2c2c2"></div><div style="position:absolute;left:28px;top:380px;width:1103px;height:1px;background:#dadada"></div><div style="position:absolute;left:0px;top:380px;width:27px;height:1px;background:#c2c2c2"></div><div style="position:absolute;left:28px;top:402px;width:1103px;height:1px;background:#dadada"></div><div style="position:absolute;left:0px;top:402px;width:27px;height:1px;background:#c2c2c2"></div><div style="position:absolute;left:28px;top:424px;width:1103px;height:1px;background:#dadada"></div><div style="position:absolute;left:0px;top:424px;width:27px;height:1px;background:#c2c2c2"></div><div style="position:absolute;left:28px;top:446px;width:1103px;height:1px;background:#dadada"></div><div style="position:absolute;left:0px;top:446px;width:27px;height:1px;background:#c2c2c2"></div><div style="position:absolute;left:28px;top:468px;width:1103px;height:1px;background:#dadada"></div><div style="position:absolute;left:0px;top:468px;width:27px;height:1px;background:#c2c2c2"></div><div style="position:absolute;left:28px;top:490px;width:1103px;height:1px;background:#dadada"></div><div style="position:absolute;left:0px;top:490px;width:27px;height:1px;background:#c2c2c2"></div><div style="position:absolute;left:28px;top:512px;width:1103px;height:1px;background:#dadada"></div><div style="position:absolute;left:0px;top:512px;width:27px;height:1px;background:#c2c2c2"></div><div style="position:absolute;left:28px;top:534px;width:1103px;height:1px;background:#dadada"></div><div style="position:absolute;left:0px;top:534px;width:27px;height:1px;background:#c2c2c2"></div><div style="position:absolute;left:28px;top:556px;width:1103px;height:1px;background:#dadada"></div><div style="position:absolute;left:0px;top:556px;width:27px;height:1px;background:#c2c2c2"></div><div style="position:absolute;left:28px;top:578px;width:1103px;height:1px;background:#dadada"></div><div style="position:absolute;left:0px;top:578px;width:27px;height:1px;background:#c2c2c2"></div><div style="position:absolute;left:28px;top:600px;width:1103px;height:1px;background:#dadada"></div><div style="position:absolute;left:0px;top:600px;width:27px;height:1px;background:#c2c2c2"></div><div style="position:absolute;left:28px;top:622px;width:1103px;height:1px;background:#dadada"></div><div style="position:absolute;left:0px;top:622px;width:27px;height:1px;background:#c2c2c2"></div><div style="position:absolute;left:28px;top:644px;width:1103px;height:1px;background:#dadada"></div><div style="position:absolute;left:0px;top:644px;width:27px;height:1px;background:#c2c2c2"></div><div style="position:absolute;left:28px;top:666px;width:1103px;height:1px;background:#dadada"></div><div style="position:absolute;left:0px;top:666px;width:27px;height:1px;background:#c2c2c2"></div><div style="position:absolute;left:28px;top:688px;width:1103px;height:1px;background:#dadada"></div><div style="position:absolute;left:0px;top:688px;width:27px;height:1px;background:#c2c2c2"></div><div style="position:absolute;left:28px;top:710px;width:1103px;height:1px;background:#dadada"></div><div style="position:absolute;left:0px;top:710px;width:27px;height:1px;background:#c2c2c2"></div><div style="position:absolute;left:28px;top:732px;width:1103px;height:1px;background:#dadada"></div><div style="position:absolute;left:0px;top:732px;width:27px;height:1px;background:#c2c2c2"></div><div style="position:absolute;left:28px;top:754px;width:1103px;height:1px;background:#dadada"></div><div style="position:absolute;left:0px;top:754px;width:27px;height:1px;background:#c2c2c2"></div><div style="position:absolute;left:28px;top:776px;width:1103px;height:1px;background:#dadada"></div><div style="position:absolute;left:0px;top:776px;width:27px;height:1px;background:#c2c2c2"></div><div style="position:absolute;left:28px;top:798px;width:1103px;height:1px;background:#dadada"></div><div style="position:absolute;left:0px;top:798px;width:27px;height:1px;background:#c2c2c2"></div><div style="position:absolute;left:28px;top:820px;width:1103px;height:1px;background:#dadada"></div><div style="position:absolute;left:0px;top:820px;width:27px;height:1px;background:#c2c2c2"></div><div style="position:absolute;left:28px;top:842px;width:1103px;height:1px;background:#dadada"></div><div style="position:absolute;left:0px;top:842px;width:27px;height:1px;background:#c2c2c2"></div><div style="position:absolute;left:28px;top:864px;width:1103px;height:1px;background:#dadada"></div><div style="position:absolute;left:0px;top:864px;width:27px;height:1px;background:#c2c2c2"></div>
<div style="position:absolute;left:28px;top:248px;width:95px;height:1px;background:#8ea9db"></div>
<div style="position:absolute;left:122px;top:226px;width:1px;height:644px;background:#dadada"></div>
<div style="position:absolute;left:122px;top:205px;width:1px;height:20px;background:#bdbdbd"></div>
<div style="position:absolute;left:216px;top:226px;width:1px;height:644px;background:#dadada"></div>
<div style="position:absolute;left:216px;top:205px;width:1px;height:20px;background:#bdbdbd"></div>
<div style="position:absolute;left:357px;top:226px;width:1px;height:644px;background:#dadada"></div>
<div style="position:absolute;left:357px;top:205px;width:1px;height:20px;background:#bdbdbd"></div>
<div style="position:absolute;left:473px;top:226px;width:1px;height:644px;background:#dadada"></div>
<div style="position:absolute;left:473px;top:205px;width:1px;height:20px;background:#bdbdbd"></div>
<div style="position:absolute;left:549px;top:226px;width:1px;height:644px;background:#dadada"></div>
<div style="position:absolute;left:549px;top:205px;width:1px;height:20px;background:#bdbdbd"></div>
<div style="position:absolute;left:779px;top:226px;width:1px;height:644px;background:#dadada"></div>
<div style="position:absolute;left:779px;top:205px;width:1px;height:20px;background:#bdbdbd"></div>
<div style="position:absolute;left:849px;top:226px;width:1px;height:644px;background:#dadada"></div>
<div style="position:absolute;left:849px;top:205px;width:1px;height:20px;background:#bdbdbd"></div>
<div style="position:absolute;left:919px;top:226px;width:1px;height:644px;background:#dadada"></div>
<div style="position:absolute;left:919px;top:205px;width:1px;height:20px;background:#bdbdbd"></div>
<div style="position:absolute;left:989px;top:226px;width:1px;height:644px;background:#dadada"></div>
<div style="position:absolute;left:989px;top:205px;width:1px;height:20px;background:#bdbdbd"></div>
<div style="position:absolute;left:1059px;top:226px;width:1px;height:644px;background:#dadada"></div>
<div style="position:absolute;left:1059px;top:205px;width:1px;height:20px;background:#bdbdbd"></div>
<div style="position:absolute;left:1129px;top:226px;width:1px;height:644px;background:#dadada"></div>
<div style="position:absolute;left:1129px;top:205px;width:1px;height:20px;background:#bdbdbd"></div>
<div style="position:absolute;left:28px;top:226px;width:95px;height:22px;background:#8ea9db"></div>
<div style="position:absolute;left:122px;top:226px;width:1px;height:23px;background:#8ea9db"></div>
<div style="position:absolute;left:0px;top:225px;width:1132px;height:1px;background:#9e9e9e"></div>
<div style="position:absolute;left:27px;top:205px;width:1px;height:665px;background:#9e9e9e"></div>
<div style="position:absolute;left:1131px;top:225px;width:1px;height:645px;background:#9e9e9e"></div>
<svg style="position:absolute;left:11px;top:209px;" width="13" height="13" viewBox="0 0 13 13"><path d="M12.5 0.5 V12.5 H0.5 Z" fill="#bdbdbd"/></svg>
<div class="t" style="left:70.23px;top:208.70px;font-size:14.3px;color:#262626;letter-spacing:0.000px;font-weight:normal;font-style:normal;">A</div>
<div class="t" style="left:164.73px;top:208.70px;font-size:14.3px;color:#262626;letter-spacing:0.000px;font-weight:normal;font-style:normal;">B</div>
<div class="t" style="left:281.84px;top:208.70px;font-size:14.3px;color:#262626;letter-spacing:0.000px;font-weight:normal;font-style:normal;">C</div>
<div class="t" style="left:410.34px;top:208.70px;font-size:14.3px;color:#262626;letter-spacing:0.000px;font-weight:normal;font-style:normal;">D</div>
<div class="t" style="left:506.73px;top:208.70px;font-size:14.3px;color:#262626;letter-spacing:0.000px;font-weight:normal;font-style:normal;">E</div>
<div class="t" style="left:660.13px;top:208.70px;font-size:14.3px;color:#217346;letter-spacing:0.000px;font-weight:normal;font-style:normal;">F</div>
<div class="t" style="left:808.94px;top:208.70px;font-size:14.3px;color:#262626;letter-spacing:0.000px;font-weight:normal;font-style:normal;">G</div>
<div class="t" style="left:879.34px;top:208.70px;font-size:14.3px;color:#262626;letter-spacing:0.000px;font-weight:normal;font-style:normal;">H</div>
<div class="t" style="left:952.51px;top:208.70px;font-size:14.3px;color:#262626;letter-spacing:0.000px;font-weight:normal;font-style:normal;">I</div>
<div class="t" style="left:1020.92px;top:208.70px;font-size:14.3px;color:#262626;letter-spacing:0.000px;font-weight:normal;font-style:normal;">J</div>
<div class="t" style="left:1089.73px;top:208.70px;font-size:14.3px;color:#262626;letter-spacing:0.000px;font-weight:normal;font-style:normal;">K</div>
<div style="position:absolute;left:549px;top:224px;width:231px;height:2px;background:#217346"></div>
<div class="t" style="left:9.52px;top:230.80px;font-size:14.3px;color:#262626;letter-spacing:0.000px;font-weight:normal;font-style:normal;">1</div>
<div class="t" style="left:9.52px;top:252.80px;font-size:14.3px;color:#217346;letter-spacing:0.000px;font-weight:normal;font-style:normal;">2</div>
<div class="t" style="left:9.52px;top:274.80px;font-size:14.3px;color:#262626;letter-spacing:0.000px;font-weight:normal;font-style:normal;">3</div>
<div class="t" style="left:9.52px;top:296.80px;font-size:14.3px;color:#262626;letter-spacing:0.000px;font-weight:normal;font-style:normal;">4</div>
<div class="t" style="left:9.52px;top:318.80px;font-size:14.3px;color:#262626;letter-spacing:0.000px;font-weight:normal;font-style:normal;">5</div>
<div class="t" style="left:9.52px;top:340.80px;font-size:14.3px;color:#262626;letter-spacing:0.000px;font-weight:normal;font-style:normal;">6</div>
<div class="t" style="left:9.52px;top:362.80px;font-size:14.3px;color:#262626;letter-spacing:0.000px;font-weight:normal;font-style:normal;">7</div>
<div class="t" style="left:9.52px;top:384.80px;font-size:14.3px;color:#262626;letter-spacing:0.000px;font-weight:normal;font-style:normal;">8</div>
<div class="t" style="left:9.52px;top:406.80px;font-size:14.3px;color:#262626;letter-spacing:0.000px;font-weight:normal;font-style:normal;">9</div>
<div class="t" style="left:5.55px;top:428.80px;font-size:14.3px;color:#262626;letter-spacing:0.000px;font-weight:normal;font-style:normal;">10</div>
<div class="t" style="left:6.08px;top:450.80px;font-size:14.3px;color:#262626;letter-spacing:0.000px;font-weight:normal;font-style:normal;">11</div>
<div class="t" style="left:5.55px;top:472.80px;font-size:14.3px;color:#262626;letter-spacing:0.000px;font-weight:normal;font-style:normal;">12</div>
<div class="t" style="left:5.55px;top:494.80px;font-size:14.3px;color:#262626;letter-spacing:0.000px;font-weight:normal;font-style:normal;">13</div>
<div class="t" style="left:5.55px;top:516.80px;font-size:14.3px;color:#262626;letter-spacing:0.000px;font-weight:normal;font-style:normal;">14</div>
<div class="t" style="left:5.55px;top:538.80px;font-size:14.3px;color:#262626;letter-spacing:0.000px;font-weight:normal;font-style:normal;">15</div>
<div class="t" style="left:5.55px;top:560.80px;font-size:14.3px;color:#262626;letter-spacing:0.000px;font-weight:normal;font-style:normal;">16</div>
<div class="t" style="left:5.55px;top:582.80px;font-size:14.3px;color:#262626;letter-spacing:0.000px;font-weight:normal;font-style:normal;">17</div>
<div class="t" style="left:5.55px;top:604.80px;font-size:14.3px;color:#262626;letter-spacing:0.000px;font-weight:normal;font-style:normal;">18</div>
<div class="t" style="left:5.55px;top:626.80px;font-size:14.3px;color:#262626;letter-spacing:0.000px;font-weight:normal;font-style:normal;">19</div>
<div class="t" style="left:5.55px;top:648.80px;font-size:14.3px;color:#262626;letter-spacing:0.000px;font-weight:normal;font-style:normal;">20</div>
<div class="t" style="left:5.55px;top:670.80px;font-size:14.3px;color:#262626;letter-spacing:0.000px;font-weight:normal;font-style:normal;">21</div>
<div class="t" style="left:5.55px;top:692.80px;font-size:14.3px;color:#262626;letter-spacing:0.000px;font-weight:normal;font-style:normal;">22</div>
<div class="t" style="left:5.55px;top:714.80px;font-size:14.3px;color:#262626;letter-spacing:0.000px;font-weight:normal;font-style:normal;">23</div>
<div class="t" style="left:5.55px;top:736.80px;font-size:14.3px;color:#262626;letter-spacing:0.000px;font-weight:normal;font-style:normal;">24</div>
<div class="t" style="left:5.55px;top:758.80px;font-size:14.3px;color:#262626;letter-spacing:0.000px;font-weight:normal;font-style:normal;">25</div>
<div class="t" style="left:5.55px;top:780.80px;font-size:14.3px;color:#262626;letter-spacing:0.000px;font-weight:normal;font-style:normal;">26</div>
<div class="t" style="left:5.55px;top:802.80px;font-size:14.3px;color:#262626;letter-spacing:0.000px;font-weight:normal;font-style:normal;">27</div>
<div class="t" style="left:5.55px;top:824.80px;font-size:14.3px;color:#262626;letter-spacing:0.000px;font-weight:normal;font-style:normal;">28</div>
<div class="t" style="left:5.55px;top:846.80px;font-size:14.3px;color:#262626;letter-spacing:0.000px;font-weight:normal;font-style:normal;">29</div>
<div style="position:absolute;left:26px;top:249px;width:2px;height:21px;background:#217346"></div>
<div style="position:absolute;left:28px;top:226px;width:94px;height:22px;overflow:hidden">
<div class="t" style="left:3px;top:1.86px;font-size:18.6px;font-weight:bold;color:#000;letter-spacing:-0.1px">First Name</div>
</div>
<div class="t" style="left:124.40px;top:230.67px;font-size:14.45px;color:#000000;letter-spacing:0.000px;font-weight:normal;font-style:normal;">Last Name</div>
<div class="t" style="left:218.40px;top:230.67px;font-size:14.45px;color:#000000;letter-spacing:0.000px;font-weight:normal;font-style:normal;">Program</div>
<div class="t" style="left:359.40px;top:230.67px;font-size:14.45px;color:#000000;letter-spacing:0.000px;font-weight:normal;font-style:normal;">Home District</div>
<div class="t" style="left:475.40px;top:230.67px;font-size:14.45px;color:#000000;letter-spacing:0.000px;font-weight:normal;font-style:normal;">Bus Route</div>
<div class="t" style="left:551.40px;top:230.67px;font-size:14.45px;color:#000000;letter-spacing:0.000px;font-weight:normal;font-style:normal;">Email</div>
<div class="t" style="left:29.40px;top:252.67px;font-size:14.45px;color:#000000;letter-spacing:0.000px;font-weight:normal;font-style:normal;">John</div>
<div class="t" style="left:124.40px;top:252.67px;font-size:14.45px;color:#000000;letter-spacing:0.000px;font-weight:normal;font-style:normal;">Smith</div>
<div class="t" style="left:218.40px;top:252.67px;font-size:14.45px;color:#000000;letter-spacing:0.000px;font-weight:normal;font-style:normal;">Aviation</div>
<div class="t" style="left:359.40px;top:252.67px;font-size:14.45px;color:#000000;letter-spacing:0.000px;font-weight:normal;font-style:normal;">Schodack</div>
<div class="t" style="left:530.53px;top:252.67px;font-size:14.45px;color:#000000;letter-spacing:0.000px;font-weight:normal;font-style:normal;">17</div>
<div class="t" style="left:551.40px;top:252.67px;font-size:14.45px;color:#0563c1;letter-spacing:0.000px;font-weight:normal;font-style:normal;text-decoration:underline;text-underline-offset:2px;text-decoration-thickness:1px">John.Smith1@questar.org</div>
<div class="t" style="left:29.40px;top:274.67px;font-size:14.45px;color:#000000;letter-spacing:0.000px;font-weight:normal;font-style:normal;">Lisette</div>
<div class="t" style="left:124.40px;top:274.67px;font-size:14.45px;color:#000000;letter-spacing:0.000px;font-weight:normal;font-style:normal;">Doria</div>
<div class="t" style="left:218.40px;top:274.67px;font-size:14.45px;color:#000000;letter-spacing:0.000px;font-weight:normal;font-style:normal;">Cosmetology</div>
<div class="t" style="left:359.40px;top:274.67px;font-size:14.45px;color:#000000;letter-spacing:0.000px;font-weight:normal;font-style:normal;">Troy</div>
<div class="t" style="left:538.56px;top:274.67px;font-size:14.45px;color:#000000;letter-spacing:0.000px;font-weight:normal;font-style:normal;">5</div>
<div class="t" style="left:551.40px;top:274.67px;font-size:14.45px;color:#0563c1;letter-spacing:0.000px;font-weight:normal;font-style:normal;text-decoration:underline;text-underline-offset:2px;text-decoration-thickness:1px">Lisette.Doria1@questar.org</div>
<div class="t" style="left:29.40px;top:296.67px;font-size:14.45px;color:#000000;letter-spacing:0.000px;font-weight:normal;font-style:normal;">Carina</div>
<div class="t" style="left:124.40px;top:296.67px;font-size:14.45px;color:#000000;letter-spacing:0.000px;font-weight:normal;font-style:normal;">Tess</div>
<div class="t" style="left:218.40px;top:296.67px;font-size:14.45px;color:#000000;letter-spacing:0.000px;font-weight:normal;font-style:normal;">Automotive Tech</div>
<div class="t" style="left:359.40px;top:296.67px;font-size:14.45px;color:#000000;letter-spacing:0.000px;font-weight:normal;font-style:normal;">Rensselaer</div>
<div class="t" style="left:531.60px;top:296.67px;font-size:14.45px;color:#000000;letter-spacing:0.000px;font-weight:normal;font-style:normal;">11</div>
<div class="t" style="left:551.40px;top:296.67px;font-size:14.45px;color:#0563c1;letter-spacing:0.000px;font-weight:normal;font-style:normal;text-decoration:underline;text-underline-offset:2px;text-decoration-thickness:1px">Carina.Tess1@questar.org</div>
<div class="t" style="left:29.40px;top:318.67px;font-size:14.45px;color:#000000;letter-spacing:0.000px;font-weight:normal;font-style:normal;">Alfie</div>
<div class="t" style="left:124.40px;top:318.67px;font-size:14.45px;color:#000000;letter-spacing:0.000px;font-weight:normal;font-style:normal;">Brock</div>
<div class="t" style="left:218.40px;top:318.67px;font-size:14.45px;color:#000000;letter-spacing:0.000px;font-weight:normal;font-style:normal;">Agriculture Science</div>
<div class="t" style="left:359.40px;top:318.67px;font-size:14.45px;color:#000000;letter-spacing:0.000px;font-weight:normal;font-style:normal;">Averill Park</div>
<div class="t" style="left:530.53px;top:318.67px;font-size:14.45px;color:#000000;letter-spacing:0.000px;font-weight:normal;font-style:normal;">56</div>
<div class="t" style="left:551.40px;top:318.67px;font-size:14.45px;color:#0563c1;letter-spacing:0.000px;font-weight:normal;font-style:normal;text-decoration:underline;text-underline-offset:2px;text-decoration-thickness:1px">Alfie.Brock1@questar.org</div>
<div class="t" style="left:29.40px;top:340.67px;font-size:14.45px;color:#000000;letter-spacing:0.000px;font-weight:normal;font-style:normal;">Danielle</div>
<div class="t" style="left:124.40px;top:340.67px;font-size:14.45px;color:#000000;letter-spacing:0.000px;font-weight:normal;font-style:normal;">Jayden</div>
<div class="t" style="left:218.40px;top:340.67px;font-size:14.45px;color:#000000;letter-spacing:0.000px;font-weight:normal;font-style:normal;">Heavy Equipment</div>
<div class="t" style="left:359.40px;top:340.67px;font-size:14.45px;color:#000000;letter-spacing:0.000px;font-weight:normal;font-style:normal;">Berlin</div>
<div class="t" style="left:530.53px;top:340.67px;font-size:14.45px;color:#000000;letter-spacing:0.000px;font-weight:normal;font-style:normal;">32</div>
<div class="t" style="left:551.40px;top:340.67px;font-size:14.45px;color:#0563c1;letter-spacing:0.000px;font-weight:normal;font-style:normal;text-decoration:underline;text-underline-offset:2px;text-decoration-thickness:1px">Danielle.Jayden1@questar.org</div>
<div class="t" style="left:29.40px;top:362.67px;font-size:14.45px;color:#000000;letter-spacing:0.000px;font-weight:normal;font-style:normal;">Jake</div>
<div class="t" style="left:124.40px;top:362.67px;font-size:14.45px;color:#000000;letter-spacing:0.000px;font-weight:normal;font-style:normal;">Alva</div>
<div class="t" style="left:218.40px;top:362.67px;font-size:14.45px;color:#000000;letter-spacing:0.000px;font-weight:normal;font-style:normal;">Criminal Justice</div>
<div class="t" style="left:359.40px;top:362.67px;font-size:14.45px;color:#000000;letter-spacing:0.000px;font-weight:normal;font-style:normal;">Brunswick</div>
<div class="t" style="left:538.56px;top:362.67px;font-size:14.45px;color:#000000;letter-spacing:0.000px;font-weight:normal;font-style:normal;">2</div>
<div class="t" style="left:551.40px;top:362.67px;font-size:14.45px;color:#0563c1;letter-spacing:0.000px;font-weight:normal;font-style:normal;text-decoration:underline;text-underline-offset:2px;text-decoration-thickness:1px">Jake.Alva1@questar.org</div>
<div class="t" style="left:29.40px;top:384.67px;font-size:14.45px;color:#000000;letter-spacing:0.000px;font-weight:normal;font-style:normal;">Donald</div>
<div class="t" style="left:124.40px;top:384.67px;font-size:14.45px;color:#000000;letter-spacing:0.000px;font-weight:normal;font-style:normal;">Chistabel</div>
<div class="t" style="left:218.40px;top:384.67px;font-size:14.45px;color:#000000;letter-spacing:0.000px;font-weight:normal;font-style:normal;">Culinary Arts</div>
<div class="t" style="left:359.40px;top:384.67px;font-size:14.45px;color:#000000;letter-spacing:0.000px;font-weight:normal;font-style:normal;">Cairo-Durham</div>
<div class="t" style="left:538.56px;top:384.67px;font-size:14.45px;color:#000000;letter-spacing:0.000px;font-weight:normal;font-style:normal;">9</div>
<div class="t" style="left:551.40px;top:384.67px;font-size:14.45px;color:#0563c1;letter-spacing:0.000px;font-weight:normal;font-style:normal;text-decoration:underline;text-underline-offset:2px;text-decoration-thickness:1px">Donald.Chistabel1@questar.org</div>
<div class="t" style="left:29.40px;top:406.67px;font-size:14.45px;color:#000000;letter-spacing:0.000px;font-weight:normal;font-style:normal;">Geffrey</div>
<div class="t" style="left:124.40px;top:406.67px;font-size:14.45px;color:#000000;letter-spacing:0.000px;font-weight:normal;font-style:normal;">Kiera</div>
<div class="t" style="left:218.40px;top:406.67px;font-size:14.45px;color:#000000;letter-spacing:0.000px;font-weight:normal;font-style:normal;">Building Trades</div>
<div class="t" style="left:359.40px;top:406.67px;font-size:14.45px;color:#000000;letter-spacing:0.000px;font-weight:normal;font-style:normal;">Catskill</div>
<div class="t" style="left:530.53px;top:406.67px;font-size:14.45px;color:#000000;letter-spacing:0.000px;font-weight:normal;font-style:normal;">14</div>
<div class="t" style="left:551.40px;top:406.67px;font-size:14.45px;color:#0563c1;letter-spacing:0.000px;font-weight:normal;font-style:normal;text-decoration:underline;text-underline-offset:2px;text-decoration-thickness:1px">Geffrey.Kiera1@questar.org</div>
<div class="t" style="left:29.40px;top:428.67px;font-size:14.45px;color:#000000;letter-spacing:0.000px;font-weight:normal;font-style:normal;">Abbey</div>
<div class="t" style="left:124.40px;top:428.67px;font-size:14.45px;color:#000000;letter-spacing:0.000px;font-weight:normal;font-style:normal;">Louella</div>
<div class="t" style="left:218.40px;top:428.67px;font-size:14.45px;color:#000000;letter-spacing:0.000px;font-weight:normal;font-style:normal;">HVAC</div>
<div class="t" style="left:359.40px;top:428.67px;font-size:14.45px;color:#000000;letter-spacing:0.000px;font-weight:normal;font-style:normal;">Chatham</div>
<div class="t" style="left:531.60px;top:428.67px;font-size:14.45px;color:#000000;letter-spacing:0.000px;font-weight:normal;font-style:normal;">11</div>
<div class="t" style="left:551.40px;top:428.67px;font-size:14.45px;color:#0563c1;letter-spacing:0.000px;font-weight:normal;font-style:normal;text-decoration:underline;text-underline-offset:2px;text-decoration-thickness:1px">Abbey.Louella1@questar.org</div>
<div class="t" style="left:29.40px;top:450.67px;font-size:14.45px;color:#000000;letter-spacing:0.000px;font-weight:normal;font-style:normal;">Janene</div>
<div class="t" style="left:124.40px;top:450.67px;font-size:14.45px;color:#000000;letter-spacing:0.000px;font-weight:normal;font-style:normal;">Matthew</div>
<div class="t" style="left:218.40px;top:450.67px;font-size:14.45px;color:#000000;letter-spacing:0.000px;font-weight:normal;font-style:normal;">Welding</div>
<div class="t" style="left:359.40px;top:450.67px;font-size:14.45px;color:#000000;letter-spacing:0.000px;font-weight:normal;font-style:normal;">Germantown</div>
<div class="t" style="left:530.53px;top:450.67px;font-size:14.45px;color:#000000;letter-spacing:0.000px;font-weight:normal;font-style:normal;">17</div>
<div class="t" style="left:551.40px;top:450.67px;font-size:14.45px;color:#0563c1;letter-spacing:0.000px;font-weight:normal;font-style:normal;text-decoration:underline;text-underline-offset:2px;text-decoration-thickness:1px">Janene.Matthew1@questar.org</div>
<div class="t" style="left:29.40px;top:472.67px;font-size:14.45px;color:#000000;letter-spacing:0.000px;font-weight:normal;font-style:normal;">Miranda</div>
<div class="t" style="left:124.40px;top:472.67px;font-size:14.45px;color:#000000;letter-spacing:0.000px;font-weight:normal;font-style:normal;">Indigo</div>
<div class="t" style="left:218.40px;top:472.67px;font-size:14.45px;color:#000000;letter-spacing:0.000px;font-weight:normal;font-style:normal;">Nursing Assistant</div>
<div class="t" style="left:359.40px;top:472.67px;font-size:14.45px;color:#000000;letter-spacing:0.000px;font-weight:normal;font-style:normal;">Hoosic Valley</div>
<div class="t" style="left:538.56px;top:472.67px;font-size:14.45px;color:#000000;letter-spacing:0.000px;font-weight:normal;font-style:normal;">6</div>
<div class="t" style="left:551.40px;top:472.67px;font-size:14.45px;color:#0563c1;letter-spacing:0.000px;font-weight:normal;font-style:normal;text-decoration:underline;text-underline-offset:2px;text-decoration-thickness:1px">Miranda.Indigo1@questar.org</div>
<div class="t" style="left:29.40px;top:494.67px;font-size:14.45px;color:#000000;letter-spacing:0.000px;font-weight:normal;font-style:normal;">Adaline</div>
<div class="t" style="left:124.40px;top:494.67px;font-size:14.45px;color:#000000;letter-spacing:0.000px;font-weight:normal;font-style:normal;">Sydney</div>
<div class="t" style="left:218.40px;top:494.67px;font-size:14.45px;color:#000000;letter-spacing:0.000px;font-weight:normal;font-style:normal;">Aviation</div>
<div class="t" style="left:359.40px;top:494.67px;font-size:14.45px;color:#000000;letter-spacing:0.000px;font-weight:normal;font-style:normal;">New Lebanon</div>
<div class="t" style="left:530.53px;top:494.67px;font-size:14.45px;color:#000000;letter-spacing:0.000px;font-weight:normal;font-style:normal;">23</div>
<div class="t" style="left:551.40px;top:494.67px;font-size:14.45px;color:#0563c1;letter-spacing:0.000px;font-weight:normal;font-style:normal;text-decoration:underline;text-underline-offset:2px;text-decoration-thickness:1px">Adaline.Sydney1@questar.org</div>
<div class="t" style="left:29.40px;top:516.67px;font-size:14.45px;color:#000000;letter-spacing:0.000px;font-weight:normal;font-style:normal;">Mac</div>
<div class="t" style="left:124.40px;top:516.67px;font-size:14.45px;color:#000000;letter-spacing:0.000px;font-weight:normal;font-style:normal;">Driskoll</div>
<div class="t" style="left:218.40px;top:516.67px;font-size:14.45px;color:#000000;letter-spacing:0.000px;font-weight:normal;font-style:normal;">Cosmetology</div>
<div class="t" style="left:359.40px;top:516.67px;font-size:14.45px;color:#000000;letter-spacing:0.000px;font-weight:normal;font-style:normal;">Hudson</div>
<div class="t" style="left:530.53px;top:516.67px;font-size:14.45px;color:#000000;letter-spacing:0.000px;font-weight:normal;font-style:normal;">10</div>
<div class="t" style="left:551.40px;top:516.67px;font-size:14.45px;color:#0563c1;letter-spacing:0.000px;font-weight:normal;font-style:normal;text-decoration:underline;text-underline-offset:2px;text-decoration-thickness:1px">Mac.Driskoll1@questar.org</div>
<div class="t" style="left:29.40px;top:538.67px;font-size:14.45px;color:#000000;letter-spacing:0.000px;font-weight:normal;font-style:normal;">Megan</div>
<div class="t" style="left:124.40px;top:538.67px;font-size:14.45px;color:#000000;letter-spacing:0.000px;font-weight:normal;font-style:normal;">Koby</div>
<div class="t" style="left:218.40px;top:538.67px;font-size:14.45px;color:#000000;letter-spacing:0.000px;font-weight:normal;font-style:normal;">Automotive Tech</div>
<div class="t" style="left:359.40px;top:538.67px;font-size:14.45px;color:#000000;letter-spacing:0.000px;font-weight:normal;font-style:normal;">Wynantskill</div>
<div class="t" style="left:530.53px;top:538.67px;font-size:14.45px;color:#000000;letter-spacing:0.000px;font-weight:normal;font-style:normal;">10</div>
<div class="t" style="left:551.40px;top:538.67px;font-size:14.45px;color:#0563c1;letter-spacing:0.000px;font-weight:normal;font-style:normal;text-decoration:underline;text-underline-offset:2px;text-decoration-thickness:1px">Megan.Koby1@questar.org</div>
<div class="t" style="left:29.40px;top:560.67px;font-size:14.45px;color:#000000;letter-spacing:0.000px;font-weight:normal;font-style:normal;">Trent</div>
<div class="t" style="left:124.40px;top:560.67px;font-size:14.45px;color:#000000;letter-spacing:0.000px;font-weight:normal;font-style:normal;">Arden</div>
<div class="t" style="left:218.40px;top:560.67px;font-size:14.45px;color:#000000;letter-spacing:0.000px;font-weight:normal;font-style:normal;">Agriculture Science</div>
<div class="t" style="left:359.40px;top:560.67px;font-size:14.45px;color:#000000;letter-spacing:0.000px;font-weight:normal;font-style:normal;">Taconic Hills</div>
<div class="t" style="left:538.56px;top:560.67px;font-size:14.45px;color:#000000;letter-spacing:0.000px;font-weight:normal;font-style:normal;">5</div>
<div class="t" style="left:551.40px;top:560.67px;font-size:14.45px;color:#0563c1;letter-spacing:0.000px;font-weight:normal;font-style:normal;text-decoration:underline;text-underline-offset:2px;text-decoration-thickness:1px">Trent.Arden1@questar.org</div>
<div class="t" style="left:29.40px;top:582.67px;font-size:14.45px;color:#000000;letter-spacing:0.000px;font-weight:normal;font-style:normal;">Rena</div>
<div class="t" style="left:124.40px;top:582.67px;font-size:14.45px;color:#000000;letter-spacing:0.000px;font-weight:normal;font-style:normal;">Schuyler</div>
<div class="t" style="left:218.40px;top:582.67px;font-size:14.45px;color:#000000;letter-spacing:0.000px;font-weight:normal;font-style:normal;">Heavy Equipment</div>
<div class="t" style="left:359.40px;top:582.67px;font-size:14.45px;color:#000000;letter-spacing:0.000px;font-weight:normal;font-style:normal;">East Greenbush</div>
<div class="t" style="left:530.53px;top:582.67px;font-size:14.45px;color:#000000;letter-spacing:0.000px;font-weight:normal;font-style:normal;">12</div>
<div class="t" style="left:551.40px;top:582.67px;font-size:14.45px;color:#0563c1;letter-spacing:0.000px;font-weight:normal;font-style:normal;text-decoration:underline;text-underline-offset:2px;text-decoration-thickness:1px">Rena.Schuyler1@questar.org</div>
<div class="t" style="left:29.40px;top:604.67px;font-size:14.45px;color:#000000;letter-spacing:0.000px;font-weight:normal;font-style:normal;">Elvis</div>
<div class="t" style="left:124.40px;top:604.67px;font-size:14.45px;color:#000000;letter-spacing:0.000px;font-weight:normal;font-style:normal;">Wolf</div>
<div class="t" style="left:218.40px;top:604.67px;font-size:14.45px;color:#000000;letter-spacing:0.000px;font-weight:normal;font-style:normal;">Criminal Justice</div>
<div class="t" style="left:359.40px;top:604.67px;font-size:14.45px;color:#000000;letter-spacing:0.000px;font-weight:normal;font-style:normal;">Lansingburgh</div>
<div class="t" style="left:531.60px;top:604.67px;font-size:14.45px;color:#000000;letter-spacing:0.000px;font-weight:normal;font-style:normal;">11</div>
<div class="t" style="left:551.40px;top:604.67px;font-size:14.45px;color:#0563c1;letter-spacing:0.000px;font-weight:normal;font-style:normal;text-decoration:underline;text-underline-offset:2px;text-decoration-thickness:1px">Elvis.Wolf1@questar.org</div>
<div class="t" style="left:29.40px;top:626.67px;font-size:14.45px;color:#000000;letter-spacing:0.000px;font-weight:normal;font-style:normal;">Ritchie</div>
<div class="t" style="left:124.40px;top:626.67px;font-size:14.45px;color:#000000;letter-spacing:0.000px;font-weight:normal;font-style:normal;">Emery</div>
<div class="t" style="left:218.40px;top:626.67px;font-size:14.45px;color:#000000;letter-spacing:0.000px;font-weight:normal;font-style:normal;">Culinary Arts</div>
<div class="t" style="left:359.40px;top:626.67px;font-size:14.45px;color:#000000;letter-spacing:0.000px;font-weight:normal;font-style:normal;">Ichabod Crane</div>
<div class="t" style="left:530.53px;top:626.67px;font-size:14.45px;color:#000000;letter-spacing:0.000px;font-weight:normal;font-style:normal;">20</div>
<div class="t" style="left:551.40px;top:626.67px;font-size:14.45px;color:#0563c1;letter-spacing:0.000px;font-weight:normal;font-style:normal;text-decoration:underline;text-underline-offset:2px;text-decoration-thickness:1px">Ritchie.Emery1@questar.org</div>
<div style="position:absolute;left:548px;top:247px;width:233px;height:25px;border:2px solid #217346;box-sizing:border-box"></div>
<div style="position:absolute;left:776px;top:267px;width:7px;height:7px;background:#fff"></div>
<div style="position:absolute;left:777px;top:268px;width:5px;height:5px;background:#217346"></div>
<svg style="position:absolute;left:269px;top:513px;" width="17" height="17" viewBox="0 0 17 17"><path d="M5.5 1.5 H11.5 V5 H15.5 V11.5 H11.5 V15.5 H5.5 V11.5 H1.5 V5 H5.5 Z" fill="#fff" stroke="#000" stroke-width="1.6"/></svg>
<div style="position:absolute;left:1132px;top:205px;width:20px;height:665px;background:#e6e6e6"></div>
<div style="position:absolute;left:1135px;top:207px;width:15px;height:15px;background:#fff;border:1px solid #9e9e9e;box-sizing:border-box"></div>
<svg style="position:absolute;left:1138px;top:211px;" width="9" height="6" viewBox="0 0 9 6"><path d="M0.5 5.5 L4.5 0.5 L8.5 5.5 Z" fill="#222"/></svg>
<div style="position:absolute;left:1135px;top:222px;width:15px;height:611px;background:#fff;border:1px solid #9e9e9e;box-sizing:border-box"></div>
<div style="position:absolute;left:1135px;top:833px;width:15px;height:23px;background:#fafafa"></div>
<div style="position:absolute;left:1135px;top:856px;width:15px;height:15px;background:#fff;border:1px solid #9e9e9e;box-sizing:border-box"></div>
<svg style="position:absolute;left:1138px;top:861px;" width="9" height="6" viewBox="0 0 9 6"><path d="M0.5 0.5 L4.5 5.5 L8.5 0.5 Z" fill="#222"/></svg>
<div style="position:absolute;left:0px;top:870px;width:1152px;height:1px;background:#a8a8a8"></div>
<div style="position:absolute;left:0px;top:871px;width:1152px;height:27px;background:#e6e6e6"></div>
<svg style="position:absolute;left:25px;top:879px;" width="6" height="9" viewBox="0 0 6 9"><path d="M5.5 0.5 V8.5 L0.5 4.5 Z" fill="#c0c0c0"/></svg>
<svg style="position:absolute;left:54px;top:879px;" width="6" height="9" viewBox="0 0 6 9"><path d="M0.5 0.5 V8.5 L5.5 4.5 Z" fill="#c0c0c0"/></svg>
<div style="position:absolute;left:99px;top:870px;width:65px;height:25px;background:#fff;border-left:1px solid #a8a8a8;border-right:1px solid #a8a8a8;box-sizing:border-box"></div>
<div style="position:absolute;left:99px;top:893px;width:65px;height:2px;background:#217346"></div>
<div class="t" style="left:110.60px;top:877.86px;font-size:12.8px;color:#217346;letter-spacing:-0.395px;font-weight:bold;font-style:normal;">Sheet1</div>
<svg style="position:absolute;left:196px;top:875px;" width="18" height="18" viewBox="0 0 18 18"><circle cx="9" cy="9" r="7.6" fill="none" stroke="#666" stroke-width="1.3"/><path d="M9 4.5 V13.5 M4.5 9 H13.5" stroke="#666" stroke-width="1.5"/></svg>
<div style="position:absolute;left:691px;top:879px;width:2px;height:2px;background:#a6a6a6"></div>
<div style="position:absolute;left:691px;top:883px;width:2px;height:2px;background:#a6a6a6"></div>
<div style="position:absolute;left:691px;top:887px;width:2px;height:2px;background:#a6a6a6"></div>
<div style="position:absolute;left:708px;top:877px;width:424px;height:15px;background:#fafafa;border:1px solid #9e9e9e;box-sizing:border-box"></div>
<div style="position:absolute;left:708px;top:877px;width:15px;height:15px;background:#fff;border:1px solid #9e9e9e;box-sizing:border-box"></div>
<svg style="position:absolute;left:712px;top:880px;" width="6" height="9" viewBox="0 0 6 9"><path d="M5.5 0.5 V8.5 L0.5 4.5 Z" fill="#222"/></svg>
<div style="position:absolute;left:722px;top:877px;width:369px;height:15px;background:#fff;border:1px solid #9e9e9e;box-sizing:border-box"></div>
<div style="position:absolute;left:1117px;top:877px;width:15px;height:15px;background:#fff;border:1px solid #9e9e9e;box-sizing:border-box"></div>
<svg style="position:absolute;left:1122px;top:880px;" width="6" height="9" viewBox="0 0 6 9"><path d="M0.5 0.5 V8.5 L5.5 4.5 Z" fill="#222"/></svg>
<div style="position:absolute;left:0px;top:898px;width:1152px;height:1px;background:#c8c8c8"></div>
<div style="position:absolute;left:0px;top:899px;width:1152px;height:19px;background:#fcfcfc"></div>
<div class="t" style="left:6.40px;top:904.52px;font-size:11.2px;color:#444;letter-spacing:-0.544px;font-weight:normal;font-style:normal;">Ready</div>
<svg style="position:absolute;left:57px;top:902px;" width="15" height="14" viewBox="0 0 15 14"><circle cx="6" cy="2.3" r="1.6" fill="none" stroke="#333" stroke-width="1.1"/><path d="M0.8 4.5 Q3 6.5 4.5 4.5 H7.5 Q9 6.5 11.2 4.5 M4.5 5 Q5.5 8 4.5 10 Q3 12 4 13.5 M7.5 5 Q7 7 7.5 9" fill="none" stroke="#333" stroke-width="1.1"/><path d="M6.5 11 L9 13.5 L14 8.5" fill="none" stroke="#333" stroke-width="1.1"/></svg>
<div class="t" style="left:74.50px;top:904.52px;font-size:11.2px;color:#444;letter-spacing:0.140px;font-weight:normal;font-style:normal;">Accessibility: Good to go</div>
<div style="position:absolute;left:842px;top:899px;width:40px;height:19px;background:#d2d2d2"></div>
<svg style="position:absolute;left:855px;top:902px;" width="14" height="13" viewBox="0 0 14 13"><rect x="0.5" y="0.5" width="13" height="12" fill="none" stroke="#444" stroke-width="1"/><path d="M4.8 0.5 V12.5 M9.2 0.5 V12.5 M0.5 4.5 H13.5 M0.5 8.5 H13.5" stroke="#444" stroke-width="1"/></svg>
<svg style="position:absolute;left:895px;top:901px;" width="15" height="14" viewBox="0 0 15 14"><rect x="0.5" y="0.5" width="13.5" height="13" fill="none" stroke="#444" stroke-width="1"/><rect x="3.5" y="3" width="7.5" height="8" fill="none" stroke="#444" stroke-width="1"/><path d="M5 5.5 H9.5 M5 7.5 H9.5" stroke="#444" stroke-width="0.9"/></svg>
<svg style="position:absolute;left:935px;top:901px;" width="15" height="14" viewBox="0 0 15 14"><path d="M0.5 0.5 H14 V13.5 H0.5 Z M0.5 9 H8 V0.5" fill="none" stroke="#444" stroke-width="1"/></svg>
<div style="position:absolute;left:968px;top:908px;width:7px;height:1px;background:#444"></div>
<div style="position:absolute;left:981px;top:908px;width:100px;height:1px;background:#777"></div>
<div style="position:absolute;left:1031px;top:903px;width:5px;height:12px;background:#444"></div>
<div style="position:absolute;left:1086px;top:908px;width:8px;height:1px;background:#444"></div>
<div style="position:absolute;left:1089.5px;top:904.5px;width:1px;height:8px;background:#444"></div>
<div class="t" style="left:1107.50px;top:903.27px;font-size:11.5px;color:#444;letter-spacing:-0.786px;font-weight:normal;font-style:normal;">110%</div>
</body></html>
